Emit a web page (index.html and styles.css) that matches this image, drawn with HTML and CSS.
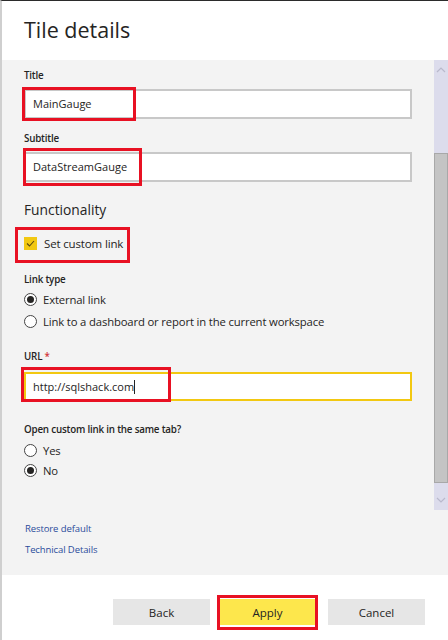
FILE: index.html
```html
<!DOCTYPE html>
<html>
<head>
<meta charset="utf-8">
<link rel="stylesheet" href="styles.css">
</head>
<body>
<div class="panel">
  <header class="header"><h1>Tile details</h1></header>
  <div class="body">
    <div class="scroller">
      <div class="form">
        <div class="label first">Title</div>
        <div class="field">
          <div class="input">MainGauge</div>
          <span class="mark mark-title"></span>
        </div>
        <div class="label">Subtitle</div>
        <div class="field tight">
          <div class="input">DataStreamGauge</div>
          <span class="mark mark-subtitle"></span>
        </div>
        <h2 class="section">Functionality</h2>
        <div class="check-row">
          <span class="checkbox"><svg width="9" height="7" viewBox="0 0 9 7"><path d="M1 3.5 L3.5 6 L8 1" fill="none" stroke="#5a4a10" stroke-width="1.1"/></svg></span>
          <span>Set custom link</span>
          <span class="mark mark-check"></span>
        </div>
        <div class="label gap-lg">Link type</div>
        <div class="radio-row first-radio"><span class="radio on"></span><span>External link</span></div>
        <div class="radio-row"><span class="radio"></span><span>Link to a dashboard or report in the current workspace</span></div>
        <div class="label gap-url">URL <span class="req">*</span></div>
        <div class="field url">
          <div class="input focus">http://sqlshack.com<span class="caret"></span></div>
          <span class="mark mark-url"></span>
        </div>
        <div class="label gap-open">Open custom link in the same tab?</div>
        <div class="radio-row first-radio2"><span class="radio"></span><span>Yes</span></div>
        <div class="radio-row close"><span class="radio on"></span><span>No</span></div>
      </div>
      <div class="scrollbar">
        <div class="sb-btn"><svg width="10" height="6" viewBox="0 0 10 6"><path d="M1 5 L5 1 L9 5" fill="none" stroke="#b9b9cc" stroke-width="1.2"/></svg></div>
        <div class="sb-track"><div class="sb-thumb"></div></div>
        <div class="sb-btn"><svg width="10" height="6" viewBox="0 0 10 6"><path d="M1 1 L5 5 L9 1" fill="none" stroke="#b9b9cc" stroke-width="1.2"/></svg></div>
      </div>
    </div>
    <div class="links">
      <a class="link">Restore default</a>
      <a class="link second">Technical Details</a>
    </div>
  </div>
  <footer class="footer">
    <button class="btn">Back</button>
    <div class="btn-wrap">
      <button class="btn primary">Apply</button>
      <span class="mark mark-apply"></span>
    </div>
    <button class="btn">Cancel</button>
  </footer>
</div>
</body>
</html>
```
FILE: styles.css
```css
* { box-sizing: border-box; }
html, body { margin: 0; padding: 0; }
body {
  width: 448px;
  height: 640px;
  overflow: hidden;
  background: #fff;
  font-family: "Segoe UI", "Open Sans", "Noto Sans", sans-serif;
  color: #252423;
}
.panel {
  height: 640px;
  border-left: 2px solid #cfcfcf;
  border-top: 1px solid #2b2b2b;
  display: flex;
  flex-direction: column;
}
.header {
  height: 59px;
  display: flex;
  align-items: center;
  padding-left: 22px;
  background: #fff;
}
.header h1 {
  margin: 0;
  font-weight: 400;
  font-size: 21.5px;
  line-height: 1;
  color: #252423;
  padding-bottom: 2px;
}
.body {
  background: #f3f3f3;
  height: 515px;
}
.scroller {
  height: 450px;
  display: flex;
}
.form {
  flex: 1;
  padding: 9px 0 0 22px;
  overflow: hidden;
}
.label {
  font-size: 9.8px;
  font-weight: 600;
  letter-spacing: -0.2px;
  line-height: 14px;
  height: 14px;
  margin-top: 13px;
  color: #252423;
}
.label.first { margin-top: 0; }
.label.gap-lg { margin-top: 21px; }
.label.gap-url { margin-top: 19px; }
.label.gap-open { margin-top: 22px; }
.req { color: #d13438; }
.field {
  position: relative;
  margin-top: 6px;
  width: 388px;
}
.field.tight { margin-top: 6px; }
.field.url { margin-top: 8px; }
.input {
  height: 30px;
  background: #fff;
  border: 2px solid #c8c8c8;
  font-size: 11px;
  line-height: 26px;
  padding-left: 7px;
  color: #252423;
}
.input.focus {
  height: 29px;
  border-color: #f2c811;
  line-height: 25px;
}
.caret {
  display: inline-block;
  width: 1px;
  height: 14px;
  background: #222;
  vertical-align: -3px;
}
.mark {
  position: absolute;
  border: 3px solid #e81123;
  pointer-events: none;
}
.mark-title { left: -2px; top: -2px; width: 114px; height: 34px; }
.mark-subtitle { left: -1px; top: -4px; width: 119px; height: 38px; }
.mark-url { left: -3px; top: -5px; width: 150px; height: 35px; }
.mark-check { left: -9px; top: -7px; width: 115px; height: 36px; }
.mark-apply { left: -2px; top: -4px; width: 101px; height: 35px; }
.section {
  margin: 17px 0 0;
  font-size: 13.8px;
  font-weight: 400;
  line-height: 22px;
  height: 22px;
  color: #252423;
}
.check-row {
  position: relative;
  margin-top: 13px;
  height: 18px;
  display: flex;
  align-items: center;
  gap: 7px;
  font-size: 11.5px;
  letter-spacing: -0.15px;
  width: 100px;
  white-space: nowrap;
}
.checkbox {
  flex: none;
  width: 13px;
  height: 13px;
  background: #f2c811;
  display: flex;
  align-items: center;
  justify-content: center;
}
.radio-row {
  margin-top: 2px;
  height: 20px;
  display: flex;
  align-items: center;
  gap: 6px;
  font-size: 11.3px;
  letter-spacing: -0.15px;
  white-space: nowrap;
}
.radio-row.first-radio { margin-top: 2px; }
.radio-row.first-radio2 { margin-top: 3px; }
.radio-row.close { margin-top: 0; }
.radio {
  width: 13px;
  height: 13px;
  border: 1px solid #444;
  border-radius: 50%;
  background: #fff;
  display: flex;
  align-items: center;
  justify-content: center;
  flex: none;
}
.radio.on::after {
  content: "";
  width: 7px;
  height: 7px;
  border-radius: 50%;
  background: #252423;
}
.scrollbar {
  width: 14px;
  background: #dcdcec;
  display: flex;
  flex-direction: column;
}
.sb-btn {
  height: 20px;
  display: flex;
  align-items: center;
  justify-content: center;
}
.sb-track { flex: 1; }
.sb-thumb {
  margin-top: 73px;
  height: 330px;
  background: #c4c4c4;
  border: 1px solid #a8a8a8;
}
.links {
  padding: 12px 0 0 23px;
  display: flex;
  flex-direction: column;
  align-items: flex-start;
}
.link {
  font-size: 9.5px;
  letter-spacing: -0.1px;
  line-height: 14px;
  color: #2b4c9b;
  cursor: pointer;
}
.link.second { margin-top: 7px; }
.footer {
  flex: 1;
  display: flex;
  justify-content: flex-end;
  align-items: flex-start;
  padding: 24px 23px 0 0;
  gap: 9px;
}
.btn-wrap { position: relative; margin-right: 3px; }
.btn {
  width: 97px;
  height: 26px;
  border: none;
  background: #e6e6e6;
  font-family: inherit;
  font-size: 11.5px;
  color: #252423;
  padding: 0;
}
.btn.primary { background: #fde74c; }
```
